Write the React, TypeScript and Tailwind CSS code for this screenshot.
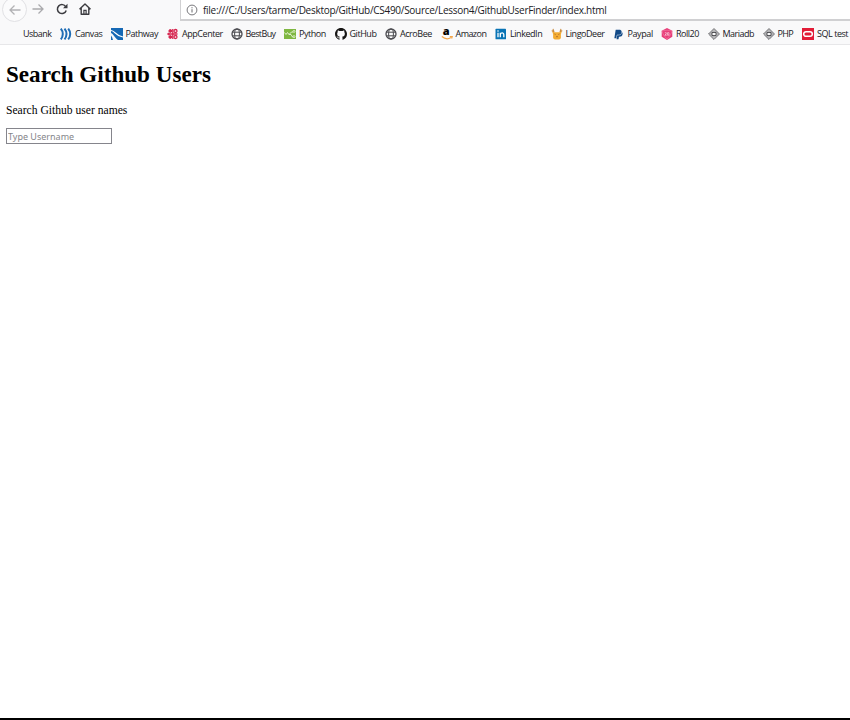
import React from "react";
import { FaPaypal } from "react-icons/fa";

function Globe() {
  return (
    <svg viewBox="0 0 12 12" className="size-3" fill="none" stroke="#4a4a4f" strokeWidth="1">
      <circle cx="6" cy="6" r="5" strokeWidth="1.3" />
      <ellipse cx="6" cy="6" rx="2.4" ry="5" />
      <path d="M1.5 4.2h9M1.5 7.8h9" />
    </svg>
  );
}

function Waves() {
  return (
    <svg viewBox="0 0 12 12" className="size-3" fill="none" stroke="#1f6db5" strokeWidth="2">
      <path d="M.8.6Q2.8 3 2.8 6T.8 11.4M4.5.6Q6.5 3 6.5 6T4.5 11.4M8.2.6Q10.2 3 10.2 6T8.2 11.4" />
    </svg>
  );
}

function PathwayIcon() {
  return (
    <svg viewBox="0 0 12 12" className="size-3">
      <path d="M0 0h12v12H0z" fill="#1669b5" />
      <path d="M0 2.5C4 2.5 5 8.500 12 9" fill="none" stroke="#fff" strokeWidth="1.1" />
      <path d="M0 5C2.5 6 4 10 7 12H0z" fill="#f9f9fa" />
      <path d="M0 7.500Q1.500 9 2 12H0z" fill="#1669b5" />
    </svg>
  );
}

function AppCenterIcon() {
  return (
    <svg viewBox="0 0 12 12" className="size-3" fill="none" stroke="#d6264f">
      <path d="M5.8 1v10M1.2 6h9.300" strokeWidth="1.300" />
      <circle cx="3.300" cy="3" r="1.400" fill="#d6264f" strokeWidth="1" />
      <circle cx="8.500" cy="3" r="1.500" strokeWidth="1.300" />
      <circle cx="3.300" cy="9" r="1.400" fill="#d6264f" strokeWidth="1" />
      <circle cx="8.500" cy="9" r="1.500" strokeWidth="1.300" />
      <circle cx="1.500" cy="6" r=".8" fill="#d6264f" />
    </svg>
  );
}

function PythonIcon() {
  return (
    <svg viewBox="0 0 12 12" className="size-3">
      <path d="M0 1h12v10H0z" fill="#7fb742" />
      <path d="M.5 4.500l1.500 2L3.500 4.500 5 6.500 7.500 4H9M5 6.500h2L8.500 9h.7" fill="none" stroke="#e9f5d9" strokeWidth=".9" />
      <circle cx="10" cy="3.400" r="1" fill="none" stroke="#e9f5d9" strokeWidth=".8" />
      <circle cx="10" cy="8.600" r="1" fill="none" stroke="#e9f5d9" strokeWidth=".8" />
    </svg>
  );
}

function GitHubIcon() {
  return (
    <svg viewBox="0 0 16 16" className="size-3" fill="#161514">
      <path d="M8 0C3.58 0 0 3.58 0 8c0 3.54 2.29 6.53 5.47 7.59.4.07.55-.17.55-.38 0-.19-.01-.82-.01-1.49-2.01.37-2.53-.49-2.69-.94-.09-.23-.48-.94-.82-1.13-.28-.15-.68-.52-.01-.53.63-.01 1.08.58 1.23.82.72 1.21 1.87.87 2.33.66.07-.52.28-.87.51-1.07-1.78-.2-3.64-.89-3.64-3.95 0-.87.31-1.59.82-2.15-.08-.2-.36-1.02.08-2.12 0 0 .67-.21 2.2.82a7.6 7.6 0 0 1 4 0c1.53-1.04 2.2-.82 2.2-.82.44 1.1.16 1.92.08 2.12.51.56.82 1.27.82 2.15 0 3.07-1.87 3.75-3.65 3.95.29.25.54.73.54 1.48 0 1.07-.01 1.93-.01 2.2 0 .21.15.46.55.38A8.01 8.01 0 0 0 16 8c0-4.42-3.58-8-8-8z" />
    </svg>
  );
}

function AmazonIcon() {
  return (
    <span className="relative block size-3">
      <svg viewBox="0 0 12 12" className="size-3" fill="none" stroke="#f3a547" strokeWidth="1.2"><path d="M.8 8.5Q5.5 12.5 10 9.5M8.8 8.5h2.4l-.6 2" /></svg>
      <span className="absolute -top-[3px] left-[2px] h-[11px] w-[7px] text-center font-['Open_Sans',sans-serif] text-[11px] leading-[11px] font-extrabold text-black">a</span>
    </span>
  );
}

function LinkedInIcon() {
  return (
    <svg viewBox="0 0 12 12" className="size-3">
      <rect x=".5" y=".8" width="10.5" height="10.5" rx=".6" fill="#0873b5" />
      <path d="M3 4.8v4.4M5.3 9.2V4.8M5.3 6.7C5.3 4.5 8.8 4.3 8.8 6.7v2.5" fill="none" stroke="#fff" strokeWidth="1.3" />
      <circle cx="3" cy="3" r=".8" fill="#fff" />
    </svg>
  );
}

function DeerIcon() {
  return (
    <svg viewBox="0 0 12 12" className="size-3">
      <path d="M2 .8l1 3M10 .8l-1 3M.8 2.5l2.4 1.8M11.2 2.500L8.800 4.300" stroke="#c98d43" strokeWidth="1.1" />
      <path d="M1.300 3.800l2 .5h5.400l2-.5-.8 2.400v4L8.300 11.500H3.700L2.100 10.200v-4z" fill="#f3ac32" />
      <path d="M3.500 6l1.200.5M8.500 6l-1.200.5M5 8.700h2" stroke="#a5662b" strokeWidth=".8" />
    </svg>
  );
}

function PaypalIcon() {
  return <FaPaypal className="size-[11px] text-[#124a87]" />;
}

function Roll20Icon() {
  return (
    <svg viewBox="0 0 12 12" className="size-3">
      <path d="M6 0l5.300 2.800v6L6 12 .7 8.800v-6z" fill="#e83e79" />
      <path d="M.7 3L6 2.200 11.300 3 9 7.500 6 11 3 7.500zM3 7.500h6" fill="none" stroke="#f58bad" strokeWidth=".5" />
      <path d="M3.800 4.700h1.500v1L4 6.900h1.500M6.500 4.700H8v2.200H6.500z" fill="none" stroke="#fff" strokeWidth=".5" />
    </svg>
  );
}

function DiamondIcon() {
  return (
    <svg viewBox="0 0 12 12" className="size-3" fill="none" stroke="#45454a" strokeWidth=".9">
      <path d="M6 .6L11.4 6 6 11.4.6 6z" />
      <path d="M6 2.500L9.500 6 6 9.500 2.500 6z" strokeWidth=".8" />
      <path d="M4 4.500h4v3H4z" strokeWidth=".9" />
    </svg>
  );
}

function OracleIcon() {
  return (
    <svg viewBox="0 0 12 12" className="size-3">
      <path d="M0 0h12v12H0z" fill="#e21c37" />
      <rect x="1.7" y="3.7" width="8.6" height="4.6" rx="2.3" fill="none" stroke="#fff" strokeWidth="1.5" />
    </svg>
  );
}

const bookmarks = [
  { label: "Canvas", Icon: Waves, width: "w-[50.5px]", tracking: "tracking-[-0.45px]" },
  { label: "Pathway", Icon: PathwayIcon, width: "w-[56.5px]", tracking: "tracking-[-0.45px]" },
  { label: "AppCenter", Icon: AppCenterIcon, width: "w-[63.5px]", tracking: "tracking-[-0.45px]" },
  { label: "BestBuy", Icon: Globe, width: "w-[53.5px]", tracking: "tracking-[-0.6px]" },
  { label: "Python", Icon: PythonIcon, width: "w-[50.5px]", tracking: "tracking-[-0.45px]" },
  { label: "GitHub", Icon: GitHubIcon, width: "w-[50.5px]", tracking: "tracking-[-0.45px]" },
  { label: "AcroBee", Icon: Globe, width: "w-[55.5px]", tracking: "tracking-[-0.45px]" },
  { label: "Amazon", Icon: AmazonIcon, width: "w-[54.5px]", tracking: "tracking-[-0.55px]" },
  { label: "LinkedIn", Icon: LinkedInIcon, width: "w-[55.5px]", tracking: "tracking-[-0.45px]" },
  { label: "LingoDeer", Icon: DeerIcon, width: "w-[62px]", tracking: "tracking-[-0.45px]" },
  { label: "Paypal", Icon: PaypalIcon, width: "w-[48.5px]", tracking: "tracking-[-0.4px]" },
  { label: "Roll20", Icon: Roll20Icon, width: "w-[46.5px]", tracking: "tracking-[-0.5px]" },
  { label: "Mariadb", Icon: DiamondIcon, width: "w-[55px]", tracking: "tracking-[-0.5px]" },
  { label: "PHP", Icon: DiamondIcon, width: "w-[39.5px]", tracking: "tracking-[-0.6px]" },
  { label: "SQL test", Icon: OracleIcon, width: "w-[48px]", tracking: "tracking-[-0.45px]" },
];

function Toolbar() {
  return (
    <div className="flex h-[21px] items-start">
      <div className="flex w-[180px] shrink-0 items-start">
        <div className="-mt-[3px] ml-[2px] flex size-[25px] shrink-0 items-center justify-center rounded-full border border-[#e1e1e4] bg-[#fbfbfc]">
          <svg viewBox="0 0 12 12" className="size-3" fill="none" stroke="#b2b2b5" strokeWidth="1.3"><path d="M11.5 6H1M5.5 1.5L1 6l4.5 4.5" /></svg>
        </div>
        <svg viewBox="0 0 12 12" className="mt-[3px] ml-[5px] size-3" fill="none" stroke="#aaaaad" strokeWidth="1.3"><path d="M.5 6H11M6.5 1.5L11 6l-4.5 4.5" /></svg>
        <svg viewBox="0 0 12 12" className="mt-[3px] ml-3 size-3" fill="none" stroke="#3c3c40" strokeWidth="1.5"><path d="M9.8 3.8A4.5 4.5 0 1 0 10.2 7.5" /><path d="M11.5.7v4.5H7z" fill="#3c3c40" stroke="none" /></svg>
        <svg viewBox="0 0 12 12" className="mt-[3px] ml-[11px] size-3" fill="none" stroke="#3c3c40" strokeWidth="1.4"><path d="M.5 6.3L6 .9l5.5 5.4M2.2 5v6.3h7.6V5" strokeLinejoin="round" /><path d="M4.900 11V7.300h2.200V11" strokeWidth="1.2" /></svg>
      </div>
      <div className="flex h-[21px] flex-1 items-start border-b-2 border-l border-[#d0d0d2] bg-white pl-[5px]">
        <svg viewBox="0 0 12 12" className="mt-[4px] size-3 shrink-0" fill="none" stroke="#69696d"><circle cx="6" cy="6" r="4.9" strokeWidth=".9" /><path d="M6 5.2v3.3M6 3.2v1.1" /></svg>
        <span className="ml-[5px] text-[10px] leading-5 tracking-[-0.285px] whitespace-nowrap text-[#202024]">file:///C:/Users/tarme/Desktop/GitHub/CS490/Source/Lesson4/GithubUserFinder/index.html</span>
      </div>
    </div>
  );
}

export default function App() {
  return (
    <div className="flex h-[720px] w-[850px] flex-col overflow-hidden border-b-2 border-black bg-white font-['Open_Sans','Noto_Sans',sans-serif]">
      <header className="h-[45px] shrink-0 border-b border-[#e7e7e9] bg-[#f9f9fa]">
        <Toolbar />
        <nav className="flex h-[23px] items-center pt-[3px] text-[9px] leading-3 text-[#202024]">
          <a className="w-[60px] shrink-0 pl-[23px] tracking-[-0.55px]">Usbank</a>
          {bookmarks.map(({ label, Icon, width, tracking }) => (
            <a key={label} className={`flex shrink-0 items-center whitespace-nowrap ${width} ${tracking}`}>
              <span className="mr-[3px] flex size-3 shrink-0 items-center justify-center"><Icon /></span>
              {label}
            </a>
          ))}
        </nav>
      </header>
      <main className="pl-[6px] font-['Liberation_Serif',serif] text-black">
        <h1 className="mt-[15px] text-[23.1px] leading-[28px] font-bold">Search Github Users</h1>
        <p className="mt-[16px] text-[11.6px] leading-[14px]">Search Github user names</p>
        <input type="text" placeholder="Type Username" className="mt-[10px] block h-4 w-[106px] border border-[#85858c] bg-white px-px font-['Noto_Sans',sans-serif] text-[9px] leading-3 placeholder:text-[#85858a]" />
      </main>
    </div>
  );
}
